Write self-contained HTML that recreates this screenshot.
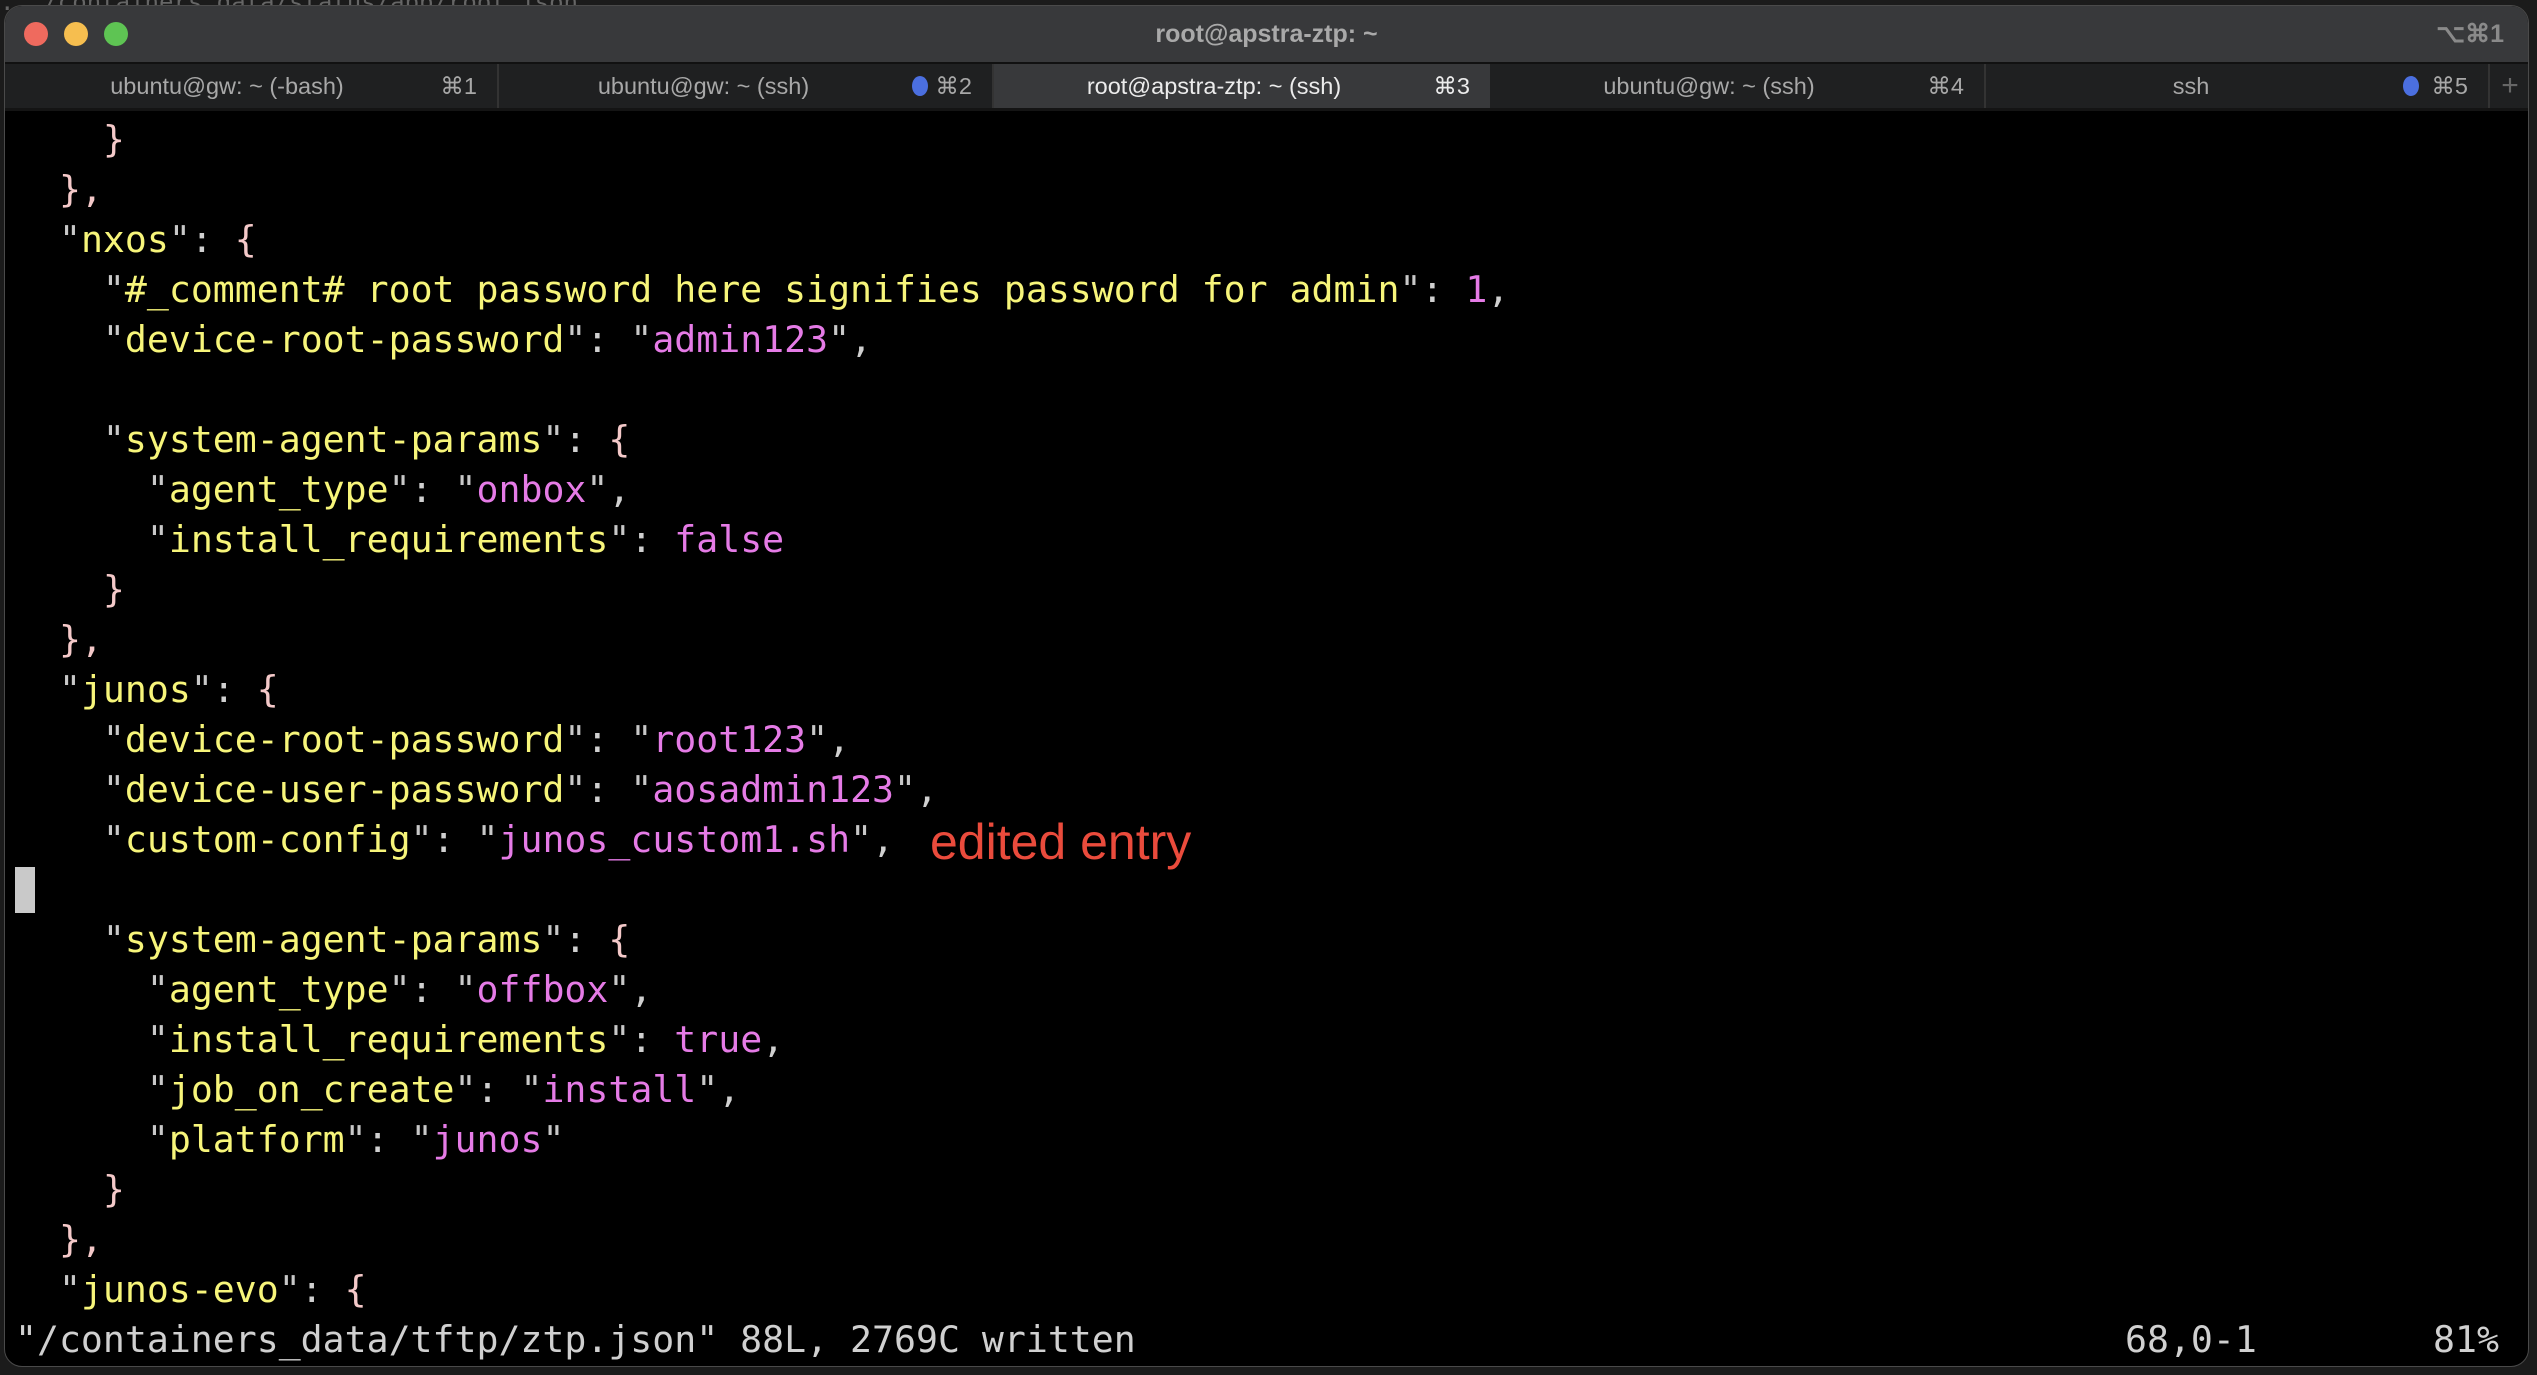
<!DOCTYPE html>
<html><head><meta charset="utf-8">
<style>
html,body{margin:0;padding:0;background:#1b1b1b;width:2537px;height:1375px;overflow:hidden}
.win{position:absolute;left:4px;top:5px;width:2525px;height:1362px;background:#000;border-radius:18px;overflow:hidden;border:1px solid #4a4a4a;box-sizing:border-box}
.title{position:absolute;left:0;top:0;right:0;height:56px;background:#38393b;font-family:"Liberation Sans",sans-serif;color:#a9a9a9;font-weight:bold;font-size:25px;text-align:center;line-height:56px}
.btn{position:absolute;top:16px;width:24px;height:24px;border-radius:50%}
.tabs{position:absolute;left:0;right:0;top:58px;height:44px;background:#1f2021;font-family:"Liberation Sans",sans-serif;font-size:23.5px;color:#a8a8a8}
.tab{position:absolute;top:0;height:44px;line-height:44px;border-right:2px solid #333;box-sizing:border-box}
.tab .t{position:absolute;left:0;right:0;text-align:center}
.tab .c{position:absolute;right:20px}
.dot{position:absolute;width:16px;height:20px;border-radius:50%;background:#4b6fe0;top:12px}
.code{position:absolute;left:10px;top:109px;font-family:"DejaVu Sans Mono","Liberation Mono",monospace;font-size:36.5px;line-height:50px;color:#d0d0d0;white-space:pre}
.k{color:#f7f57a}.s{color:#e57be6}.b{color:#f4c9c9}.q{color:#c8c8c8}
</style></head><body>
<div style="position:absolute;left:0;top:-12px;font-family:'DejaVu Sans Mono',monospace;font-size:24px;color:#666">.../containers_data/status/app/root.json</div>
<div class="win">
<div class="title">root@apstra-ztp: ~<span style="position:absolute;right:24px;font-weight:bold;color:#8a8a8a">⌥⌘1</span></div>
<div class="btn" style="left:19px;background:#ef6a5e"></div>
<div class="btn" style="left:59px;background:#f6be4f"></div>
<div class="btn" style="left:99px;background:#5ec453"></div>
<div style="position:absolute;left:0;right:0;top:56px;height:2px;background:#111"></div>
<div class="tabs">
<div class="tab" style="left:0;width:494px"><span class="t" style="right:48px">ubuntu@gw: ~ (-bash)</span><span class="c">⌘1</span></div>
<div class="tab" style="left:494px;width:495px"><span class="t" style="right:84px">ubuntu@gw: ~ (ssh)</span><span class="dot" style="left:413px"></span><span class="c">⌘2</span></div>
<div class="tab" style="left:989px;width:496px;background:#38393b;color:#ececec;border-right:none"><span class="t" style="right:56px">root@apstra-ztp: ~ (ssh)</span><span class="c">⌘3</span></div>
<div class="tab" style="left:1485px;width:496px"><span class="t" style="right:56px">ubuntu@gw: ~ (ssh)</span><span class="c">⌘4</span></div>
<div class="tab" style="left:1981px;width:504px"><span class="t" style="right:92px">ssh</span><span class="dot" style="left:417px"></span><span class="c">⌘5</span></div>
<div class="tab" style="left:2485px;width:40px;border:none;text-align:center;color:#666;font-size:30px">+</div>
</div>
<div style="position:absolute;left:0;right:0;top:102px;height:3px;background:#141414"></div>
<div class="code"><span class="b">    }</span>
<span class="b">  },</span>
  <span class="q">"</span><span class="k">nxos</span><span class="q">"</span>: <span class="b">{</span>
    <span class="q">"</span><span class="k">#_comment# root password here signifies password for admin</span><span class="q">"</span>: <span class="s">1</span>,
    <span class="q">"</span><span class="k">device-root-password</span><span class="q">"</span>: <span class="q">"</span><span class="s">admin123</span><span class="q">"</span>,

    <span class="q">"</span><span class="k">system-agent-params</span><span class="q">"</span>: <span class="b">{</span>
      <span class="q">"</span><span class="k">agent_type</span><span class="q">"</span>: <span class="q">"</span><span class="s">onbox</span><span class="q">"</span>,
      <span class="q">"</span><span class="k">install_requirements</span><span class="q">"</span>: <span class="s">false</span>
    <span class="b">}</span>
  <span class="b">},</span>
  <span class="q">"</span><span class="k">junos</span><span class="q">"</span>: <span class="b">{</span>
    <span class="q">"</span><span class="k">device-root-password</span><span class="q">"</span>: <span class="q">"</span><span class="s">root123</span><span class="q">"</span>,
    <span class="q">"</span><span class="k">device-user-password</span><span class="q">"</span>: <span class="q">"</span><span class="s">aosadmin123</span><span class="q">"</span>,
    <span class="q">"</span><span class="k">custom-config</span><span class="q">"</span>: <span class="q">"</span><span class="s">junos_custom1.sh</span><span class="q">"</span>,

    <span class="q">"</span><span class="k">system-agent-params</span><span class="q">"</span>: <span class="b">{</span>
      <span class="q">"</span><span class="k">agent_type</span><span class="q">"</span>: <span class="q">"</span><span class="s">offbox</span><span class="q">"</span>,
      <span class="q">"</span><span class="k">install_requirements</span><span class="q">"</span>: <span class="s">true</span>,
      <span class="q">"</span><span class="k">job_on_create</span><span class="q">"</span>: <span class="q">"</span><span class="s">install</span><span class="q">"</span>,
      <span class="q">"</span><span class="k">platform</span><span class="q">"</span>: <span class="q">"</span><span class="s">junos</span><span class="q">"</span>
    <span class="b">}</span>
  <span class="b">},</span>
  <span class="q">"</span><span class="k">junos-evo</span><span class="q">"</span>: <span class="b">{</span>
"/containers_data/tftp/ztp.json" 88L, 2769C written</div>
<div style="position:absolute;left:10px;top:861px;width:20px;height:46px;background:#c9c9c9"></div>
<div style="position:absolute;left:925px;top:806px;font-family:'Liberation Sans',sans-serif;font-size:50px;color:#ea4b3c;line-height:60px">edited entry</div>
<div style="position:absolute;left:2120px;top:1309px;font-family:'DejaVu Sans Mono',monospace;font-size:36.5px;line-height:50px;color:#d0d0d0;white-space:pre">68,0-1</div>
<div style="position:absolute;left:2428px;top:1309px;font-family:'DejaVu Sans Mono',monospace;font-size:36.5px;line-height:50px;color:#d0d0d0;white-space:pre">81%</div>
</div>
</body></html>
